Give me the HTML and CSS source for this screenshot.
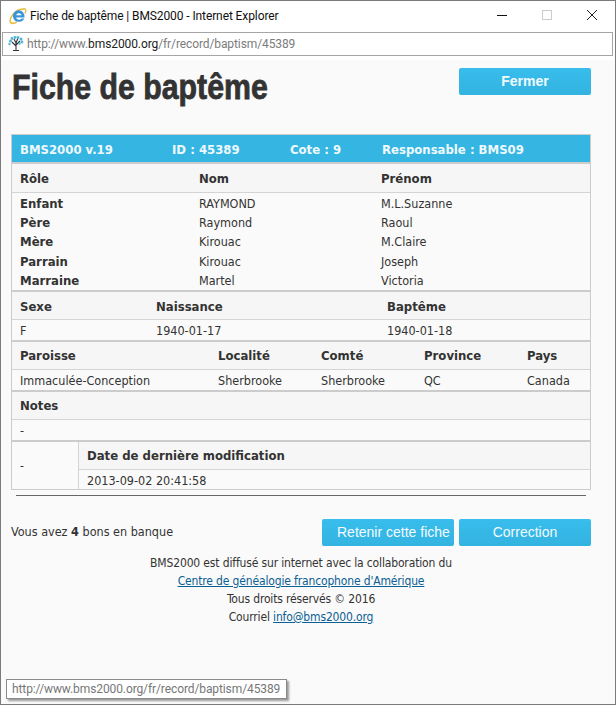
FILE: index.html
```html
<!DOCTYPE html>
<html lang="fr">
<head>
<meta charset="utf-8">
<title>Fiche de baptême | BMS2000</title>
<link rel="stylesheet" href="styles.css">
</head>
<body>
<div class="window">
  <header class="titlebar">
    <svg class="ie-icon" width="18" height="18" viewBox="0 0 18 18" aria-hidden="true">
      <path d="M13.500 2.300C10.500 2.200 6.500 4.500 4 7.500 1.500 10.500.6 13.500 1.600 15.200c1 1.500 3.700 1.300 6.400-.2" fill="none" stroke="#e6bd3c" stroke-width="1.600"/>
      <path d="M13 2.400c2.400-1.300 4.200-.6 3.800 1.700-.1.900-.5 1.700-1 2.500" fill="none" stroke="#e6bd3c" stroke-width="1.300"/>
      <path d="M15.500 10.500H7.200c.3 2.500 4 3 5.300 1h2.800c-1.700 4.300-9.500 4.800-11-.5C3 6 7 2.800 10.800 3.400c3.200.5 5 3.600 4.700 7.100zM7.300 8.200h5.300c-.3-2.500-4.800-2.800-5.300 0z" fill="#3b95dc" fill-rule="evenodd"/>
    </svg>
    <span class="window-title">Fiche de baptême | BMS2000 - Internet Explorer</span>
    <div class="controls" aria-hidden="true">
      <svg width="12" height="12" viewBox="0 0 12 12"><path d="M0 5.500h10" stroke="#111" stroke-width="1"/></svg>
      <svg width="12" height="12" viewBox="0 0 12 12"><rect x=".5" y=".5" width="9" height="9" fill="none" stroke="#ccc"/></svg>
      <svg width="12" height="12" viewBox="0 0 12 12"><path d="M0 0l10 10M10 0L0 10" stroke="#222" stroke-width="1"/></svg>
    </div>
  </header>
  <div class="addressbar">
    <svg class="tree-icon" width="18" height="18" viewBox="0 0 18 18" aria-hidden="true">
      <path d="M9 16V8M9 11L5 7M9 10l4-4M9 8L7 4M9 8l2-5M6 15.500h6" fill="none" stroke="#333" stroke-width="1.100"/>
      <g fill="#55b5d8"><circle cx="3.500" cy="6" r="1.500"/><circle cx="5" cy="3.500" r="1.400"/><circle cx="8" cy="2.500" r="1.400"/><circle cx="11" cy="2.500" r="1.400"/><circle cx="14" cy="4" r="1.500"/><circle cx="15" cy="7" r="1.400"/><circle cx="2.500" cy="9" r="1.200"/><circle cx="12.500" cy="8.500" r="1.200"/></g>
    </svg>
    <span class="url">http://www.<b>bms2000.org</b>/fr/record/baptism/45389</span>
  </div>
  <main class="page">
    <div class="page-head">
      <h1>Fiche de baptême</h1>
      <button class="btn btn-strong">Fermer</button>
    </div>
    <section class="sheet">
      <div class="row bar cols-bar"><span>BMS2000 v.19</span><span>ID : 45389</span><span>Cote : 9</span><span>Responsable : BMS09</span></div>
      <div class="row head head-first cols-a"><span>Rôle</span><span>Nom</span><span>Prénom</span></div>
      <div class="people end">
        <div class="row person cols-a"><strong>Enfant</strong><span>RAYMOND</span><span>M.L.Suzanne</span></div>
        <div class="row person cols-a"><strong>Père</strong><span>Raymond</span><span>Raoul</span></div>
        <div class="row person cols-a"><strong>Mère</strong><span>Kirouac</span><span>M.Claire</span></div>
        <div class="row person cols-a"><strong>Parrain</strong><span>Kirouac</span><span>Joseph</span></div>
        <div class="row person cols-a"><strong>Marraine</strong><span>Martel</span><span>Victoria</span></div>
      </div>
      <div class="row head head-low cols-b"><span>Sexe</span><span>Naissance</span><span>Baptême</span></div>
      <div class="row data end cols-b"><span>F</span><span>1940-01-17</span><span>1940-01-18</span></div>
      <div class="row head cols-c"><span>Paroisse</span><span>Localité</span><span>Comté</span><span>Province</span><span>Pays</span></div>
      <div class="row data end cols-c"><span>Immaculée-Conception</span><span>Sherbrooke</span><span>Sherbrooke</span><span>QC</span><span>Canada</span></div>
      <div class="row head"><span>Notes</span></div>
      <div class="row data end"><span>-</span></div>
      <div class="modified">
        <div class="modified-side">-</div>
        <div class="modified-main">
          <div class="row head"><span>Date de dernière modification</span></div>
          <div class="row data last"><span>2013-09-02 20:41:58</span></div>
        </div>
      </div>
    </section>
    <hr class="rule">
    <div class="actions">
      <p class="credits">Vous avez <b>4</b> bons en banque</p>
      <div class="action-buttons">
        <button class="btn btn-keep">Retenir cette fiche</button>
        <button class="btn">Correction</button>
      </div>
    </div>
    <footer class="footer">
      <p>BMS2000 est diffusé sur internet avec la collaboration du</p>
      <p><a href="#">Centre de généalogie francophone d'Amérique</a></p>
      <p>Tous droits réservés © 2016</p>
      <p>Courriel <a href="#">info@bms2000.org</a></p>
    </footer>
  </main>
  <div class="status-tip">http://www.bms2000.org/fr/record/baptism/45389</div>
</div>
</body>
</html>
```
FILE: styles.css
```css
* { box-sizing: border-box; }
html, body { margin: 0; height: 100%; }
body { background: #fff; }
.window {
  position: relative;
  width: 616px;
  height: 705px;
  border: 1px solid #7b7b7b;
  display: flex;
  flex-direction: column;
  background: #fff;
  font-family: "DejaVu Sans Condensed", "DejaVu Sans", sans-serif;
  font-size: 12px;
  color: #333;
  overflow: hidden;
}
.titlebar {
  height: 30px;
  flex: none;
  display: flex;
  align-items: center;
  padding-left: 8px;
}
.ie-icon { flex: none; }
.window-title {
  margin-left: 3px;
  font: 12px Roboto, sans-serif;
  letter-spacing: -.1px;
  color: #111;
  white-space: nowrap;
}
.controls {
  margin-left: auto;
  display: flex;
  gap: 33px;
  padding-right: 16px;
}
.addressbar {
  flex: none;
  margin: 1px 2px 0 1px;
  height: 24px;
  border: 1px solid #a5a5a5;
  display: flex;
  align-items: center;
  padding-left: 4px;
}
.tree-icon { flex: none; }
.url {
  margin-left: 2px;
  font: 12px Roboto, sans-serif;
  letter-spacing: -.1px;
  color: #7c7c7c;
  white-space: nowrap;
}
.url b { font-weight: 400; color: #222; }
.page {
  margin-top: 4px;
  flex: 1;
  background: #fafafa;
  padding: 8px 24px 0 10px;
}
.page-head {
  height: 66px;
  display: flex;
  justify-content: space-between;
  align-items: flex-start;
}
h1 {
  margin: 0 0 0 1px;
  font: 700 35px/38px "Liberation Sans", sans-serif;
  -webkit-text-stroke: 0.8px #333;
  color: #333;
  white-space: nowrap;
  transform: scaleX(.865);
  transform-origin: left top;
}
.btn {
  width: 132px;
  height: 27px;
  border: 0;
  border-radius: 2px;
  padding: 0 0 1px;
  background: linear-gradient(#38bdec, #33b3e0);
  color: #f2fbff;
  font: 14px "Liberation Sans", sans-serif;
}
.btn-strong { font-weight: 700; }
.btn-keep { text-align: left; padding-left: 15px; white-space: nowrap; }
.sheet {
  border: 1px solid #ccc;
  background: #fafafa;
}
.row {
  display: grid;
  align-items: center;
  padding-left: 8px;
  white-space: nowrap;
}
.cols-bar { grid-template-columns: 152px 118px 92px 1fr; }
.cols-a { grid-template-columns: 179px 182px 1fr; }
.cols-b { grid-template-columns: 136px 231px 1fr; }
.cols-c { grid-template-columns: 198px 103px 103px 103px 1fr; }
.bar {
  height: 29px;
  padding-top: 1px;
  background: #35b5e2;
  background-clip: padding-box;
  border-bottom: 2px solid #ccc;
  color: #eef9fd;
  font-weight: 700;
  font-size: 13px;
}
.head {
  height: 28px;
  background: #f6f6f6;
  border-bottom: 1px solid #d4d4d4;
  font-weight: 700;
  font-size: 13px;
  color: #333;
}
.head-first { height: 29px; }
.head-low { padding-top: 1px; }
.data { height: 20px; }
.last { height: 19px; padding-top: 1px; }
.person { height: 19.4px; }
.person:first-child { padding-top: 1px; }
.person strong { font-size: 13px; }
.people { height: 99px; padding-top: .25px; }
.end { border-bottom: 2px solid #ccc; }
.data.end { height: 22px; }
.data span, .person span { font-size: 12.5px; }
.modified {
  display: flex;
  height: 47px;
}
.modified-side {
  width: 67px;
  flex: none;
  display: flex;
  align-items: center;
  padding-left: 8px;
  border-right: 1px solid #d4d4d4;
}
.modified-main { flex: 1; }
.rule {
  margin: 5px 5px 0;
  border: 0;
  border-top: 1px solid #666;
  height: 1px;
}
.actions {
  margin-top: 23px;
  display: flex;
  justify-content: space-between;
  align-items: center;
}
.credits { margin: 0 0 2px; font-size: 12.5px; }
.action-buttons { display: flex; gap: 5px; }
.footer {
  margin-top: 8px;
  text-align: center;
  font-size: 12px;
  letter-spacing: -.15px;
  line-height: 18px;
}
.footer p { margin: 0; }
.footer a { color: #0a5f94; }
.status-tip {
  position: absolute;
  left: 5px;
  top: 678px;
  width: 281px;
  height: 20px;
  border: 1px solid #8a8a8a;
  background: #fff;
  box-shadow: 2px 2px 2px #999;
  color: #777;
  font: 12px/18px Roboto, sans-serif;
  letter-spacing: -.1px;
  padding-left: 5px;
  white-space: nowrap;
}
```
